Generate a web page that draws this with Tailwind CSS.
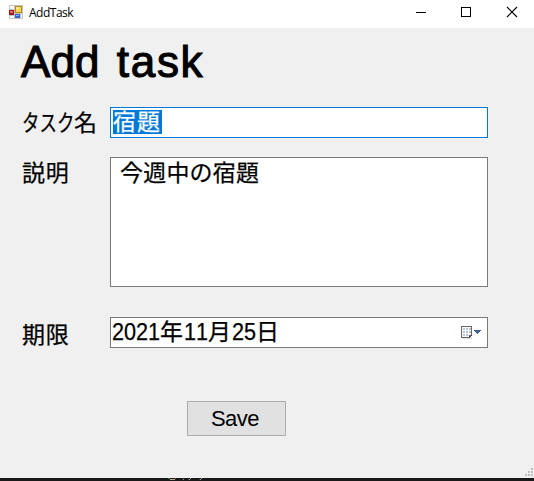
<!DOCTYPE html>
<html lang="ja">
<head>
<meta charset="utf-8">
<title>AddTask</title>
<script src="https://cdn.jsdelivr.net/npm/@tailwindcss/browser@4"></script>
</head>
<body class="w-[534px] h-[481px] overflow-hidden bg-[#f0f0f0] text-black font-['Liberation_Sans','Noto_Sans_CJK_JP',sans-serif] flex flex-col">
<header class="h-7 bg-white flex items-center shrink-0">
  <svg class="ml-[9px] -mt-1 w-[14px] h-[14px]" viewBox="0 0 14 14" shape-rendering="crispEdges">
    <rect width="14" height="14" fill="#c4c4c4"/>
    <rect x="1" y="1" width="4" height="3" fill="#fff"/><rect x="1" y="11" width="4" height="2" fill="#fff"/>
    <rect x="0" y="5" width="5" height="5" fill="#981b1e"/><rect x="1" y="6" width="3" height="2" fill="#e46a5e"/>
    <rect x="6" y="1" width="7" height="7" fill="#b98a18"/><rect x="7" y="2" width="5" height="5" fill="#ffd64f"/><rect x="7" y="2" width="3" height="2" fill="#ffeaa0"/>
    <rect x="6" y="9" width="5" height="4" fill="#3565c8"/><rect x="7" y="10" width="3" height="1" fill="#86aef5"/><rect x="12" y="9" width="1" height="4" fill="#fff"/>
  </svg>
  <span class="ml-[6px] -mt-[3px] text-[12px] leading-4 tracking-[-0.5px] font-['Open_Sans',sans-serif]">AddTask</span>
  <div class="ml-auto -mt-1 flex">
    <svg class="w-[46px] h-6" viewBox="0 0 46 24" fill="none" stroke="#000" shape-rendering="crispEdges"><path d="M17 12.5H27"/></svg>
    <svg class="w-[46px] h-6" viewBox="0 0 46 24" fill="none" stroke="#000" shape-rendering="crispEdges"><rect x="16.5" y="7.5" width="9" height="9"/></svg>
    <svg class="w-[43px] h-6" viewBox="0 0 43 24" fill="none" stroke="#000" stroke-width="1.1"><path d="M16 7L26 17M26 7L16 17"/></svg>
  </div>
</header>
<main class="h-[450px] shrink-0 relative">
  <h1 class="pt-[9px] pl-[21px] h-[79px] text-[44px] leading-[50px] whitespace-nowrap [-webkit-text-stroke:1.1px_black]"><span class="tracking-[0.1px]">Add</span><span class="tracking-[1.7px]"><span class="tracking-[5px]"> </span>task</span></h1>
  <form class="grid grid-cols-[88px_378px] pl-[22px] text-[23px] [-webkit-text-stroke:0.25px]">
    <label class="h-[50px] pt-[1px] leading-[30px] whitespace-nowrap"><span class="inline-block w-[52px]"><span class="inline-block origin-left scale-x-[0.76]">タスク</span></span><span class="tracking-[-1px]">名</span></label>
    <div class="h-[31px] bg-white border border-[#0078d7] pl-[2px] pt-[2px]"><span class="block w-[49px] h-[24px] bg-[#0078d7] text-white leading-[25px] whitespace-nowrap tracking-[1px]">宿題</span></div>
    <label class="h-[160px] pt-[1px] leading-[30px] tracking-[0.8px]">説明</label>
    <div class="h-[130px] bg-white border border-[#7a7a7a] pl-[9px] pt-[1px] leading-[29px] tracking-[0.2px] whitespace-nowrap">今週中の宿題</div>
    <label class="h-[84px] pt-[3px] leading-[30px] tracking-[0.8px]">期限</label>
    <div class="h-[31px] bg-white border border-[#7a7a7a] pl-[1px] flex items-center">
      <span class="flex leading-[29px] whitespace-nowrap [font-kerning:none]"><span class="w-[48px]"><span class="inline-block origin-left scale-x-[0.94]">2021</span></span><span class="w-6">年</span><span class="w-[24px]"><span class="inline-block origin-left scale-x-[0.94]">11</span></span><span class="w-6">月</span><span class="w-[24px]"><span class="inline-block origin-left scale-x-[0.94]">25</span></span><span>日</span></span>
      <svg class="ml-auto mr-[5px] w-[22px] h-[15px]" viewBox="0 0 22 15" shape-rendering="crispEdges">
        <rect x="2" y="12" width="10" height="2" fill="#e1e1e1"/>
        <path d="M1.500 1.500H11.500V9.500L8.500 12.500H1.500Z" fill="#fff" stroke="#716563"/>
        <path d="M3 3h2v2H3zM6 3h2v2H6zM9 3h2v2H9zM3 6h2v2H3zM6 6h2v2H6zM9 6h2v2H9zM3 9h2v2H3zM6 9h2v2H6z" fill="#b8c4d8"/>
        <path d="M9 10h3l-3 3z" fill="#56505a"/>
        <path d="M14 5h7v1h-1v1h-1v1h-1v1h-1V8h-1V7h-1V6h-1z" fill="#3f5e94"/>
      </svg>
    </div>
  </form>
  <button class="ml-[187px] w-[99px] h-[35px] block bg-[#e1e1e1] border border-[#adadad] text-[22px] leading-[34px] pr-[3px] tracking-[-0.5px]">Save</button>
  <svg class="absolute right-0 bottom-0 w-[10px] h-[11px]" viewBox="0 0 10 11" fill="#bfbfbf" shape-rendering="crispEdges"><path d="M7 1h2v2H7zM4 4h2v2H4zM7 4h2v2H7zM1 7h2v2H1zM4 7h2v2H4zM7 7h2v2H7z"/></svg>
</main>
<footer class="h-[3px] shrink-0 bg-[#1a1718]">
  <svg class="ml-[168px] w-[36px] h-[3px]" viewBox="0 0 36 3" shape-rendering="crispEdges"><path d="M0 0h2v1H0z" fill="#287868"/><path d="M2 1h5v1H2z" fill="#b9aa91"/><path d="M7 0h1v1H7z" fill="#805040"/><path d="M14 0h1v1h-1zM20 1h1v1h-1zM31 1h1v1h-1z" fill="#35358a"/><path d="M15 1h1v1h-1zM22 0h1v1h-1zM21 1h1v1h-1zM33 0h1v1h-1zM32 1h1v1h-1z" fill="#aaa46d"/></svg>
</footer>
</body>
</html>
